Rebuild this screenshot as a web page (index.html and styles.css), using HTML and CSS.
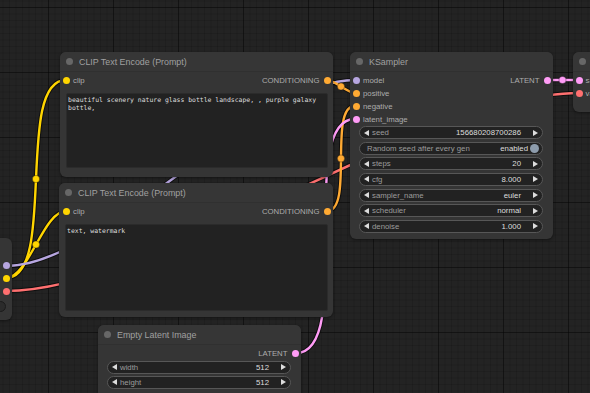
FILE: index.html
```html
<!DOCTYPE html>
<html>
<head>
<meta charset="utf-8">
<link rel="stylesheet" href="styles.css">
</head>
<body>
<div class="canvas">
  <svg class="links" width="590" height="393" viewBox="0 0 590 393">
    <g class="halo">
      <path d="M6,278 C57.7,278 14.3,80 66,80"/>
      <path d="M6,278 C28.5,278 43.5,211 66,211"/>
      <path d="M6,266 C104.9,266 256.1,80 355,80"/>
      <path d="M6,291 C157.3,291 426.7,93 579,93"/>
      <path d="M327,80 C334.7,80 347.3,93 355,93"/>
      <path d="M327,211 C354.2,211 327.8,106 355,106"/>
      <path d="M296,353 C356.3,353 294.7,119 355,119"/>
      <path d="M546,80 C554,80 571,80 579,80"/>
    </g>
    <g class="wire clip"><path d="M6,278 C57.7,278 14.3,80 66,80"/><path d="M6,278 C28.5,278 43.5,211 66,211"/></g>
    <g class="wire model"><path d="M6,266 C104.9,266 256.1,80 355,80"/></g>
    <g class="wire vae"><path d="M6,291 C157.3,291 426.7,93 579,93"/></g>
    <g class="wire cond"><path d="M327,80 C334.7,80 347.3,93 355,93"/><path d="M327,211 C354.2,211 327.8,106 355,106"/></g>
    <g class="wire latent"><path d="M296,353 C356.3,353 294.7,119 355,119"/><path d="M546,80 C554,80 571,80 579,80"/></g>
    <circle class="mid clipc" cx="36" cy="179" r="3.6"/>
    <circle class="mid clipc" cx="36" cy="244.5" r="3.6"/>
    <circle class="mid condc" cx="341" cy="86.5" r="3.6"/>
    <circle class="mid condc" cx="341" cy="158.5" r="3.6"/>
    <circle class="mid latentc" cx="562.5" cy="80" r="3.6"/>
  </svg>

  <!-- partial left node -->
  <div class="node node-left">
    <div class="left-slots">
      <span class="dot model-dot"></span>
      <span class="dot clip-dot"></span>
      <span class="dot vae-dot"></span>
      <span class="ring"></span>
    </div>
  </div>

  <!-- CLIP 1 -->
  <div class="node node-clip1">
    <div class="title"><span class="tdot"></span><span>CLIP Text Encode (Prompt)</span></div>
    <div class="body">
      <div class="io">
        <div class="slot"><span class="dot clip-dot"></span><span>clip</span></div>
        <div class="slot out"><span>CONDITIONING</span><span class="dot cond-dot"></span></div>
      </div>
      <div class="prompt prompt1">beautiful scenery nature glass bottle landscape, , purple galaxy bottle,</div>
    </div>
  </div>

  <!-- CLIP 2 -->
  <div class="node node-clip2">
    <div class="title"><span class="tdot"></span><span>CLIP Text Encode (Prompt)</span></div>
    <div class="body">
      <div class="io">
        <div class="slot"><span class="dot clip-dot"></span><span>clip</span></div>
        <div class="slot out"><span>CONDITIONING</span><span class="dot cond-dot"></span></div>
      </div>
      <div class="prompt prompt2">text, watermark</div>
    </div>
  </div>

  <!-- KSampler -->
  <div class="node node-ks">
    <div class="title"><span class="tdot"></span><span>KSampler</span></div>
    <div class="body">
      <div class="io">
        <div class="col">
          <div class="slot"><span class="dot model-dot"></span><span>model</span></div>
          <div class="slot"><span class="dot cond-dot"></span><span>positive</span></div>
          <div class="slot"><span class="dot cond-dot"></span><span>negative</span></div>
          <div class="slot"><span class="dot latent-dot"></span><span>latent_image</span></div>
        </div>
        <div class="col">
          <div class="slot out"><span>LATENT</span><span class="dot latent-dot"></span></div>
        </div>
      </div>
      <div class="widgets">
        <div class="widget"><span class="arr l"></span><span class="wl">seed</span><span class="wv">156680208700286</span><span class="arr r"></span></div>
        <div class="widget toggle"><span class="wl">Random seed after every gen</span><span class="wv">enabled</span><span class="knob"></span></div>
        <div class="widget"><span class="arr l"></span><span class="wl">steps</span><span class="wv">20</span><span class="arr r"></span></div>
        <div class="widget"><span class="arr l"></span><span class="wl">cfg</span><span class="wv">8.000</span><span class="arr r"></span></div>
        <div class="widget"><span class="arr l"></span><span class="wl">sampler_name</span><span class="wv">euler</span><span class="arr r"></span></div>
        <div class="widget"><span class="arr l"></span><span class="wl">scheduler</span><span class="wv">normal</span><span class="arr r"></span></div>
        <div class="widget"><span class="arr l"></span><span class="wl">denoise</span><span class="wv">1.000</span><span class="arr r"></span></div>
      </div>
    </div>
  </div>

  <!-- Empty Latent Image -->
  <div class="node node-latent">
    <div class="title"><span class="tdot"></span><span>Empty Latent Image</span></div>
    <div class="body">
      <div class="io">
        <div class="col"></div>
        <div class="slot out"><span>LATENT</span><span class="dot latent-dot"></span></div>
      </div>
      <div class="widgets">
        <div class="widget"><span class="arr l"></span><span class="wl">width</span><span class="wv">512</span><span class="arr r"></span></div>
        <div class="widget"><span class="arr l"></span><span class="wl">height</span><span class="wv">512</span><span class="arr r"></span></div>
      </div>
    </div>
  </div>

  <!-- partial right node -->
  <div class="node node-right">
    <div class="title"><span class="tdot"></span></div>
    <div class="body">
      <div class="slot"><span class="dot latent-dot"></span><span>samples</span></div>
      <div class="slot"><span class="dot vae-dot"></span><span>vae</span></div>
    </div>
  </div>
</div>
</body>
</html>
```

FILE: styles.css
```css
* { box-sizing: border-box; }
html, body { margin: 0; padding: 0; }
body {
  width: 590px;
  height: 393px;
  overflow: hidden;
  font-family: "Liberation Sans", Arial, sans-serif;
}
.canvas {
  position: relative;
  width: 590px;
  height: 393px;
  overflow: hidden;
  background-color: #232323;
  background-image:
    linear-gradient(to right, rgba(0,0,0,0.38) 1px, transparent 1px),
    linear-gradient(to bottom, rgba(0,0,0,0.38) 1px, transparent 1px),
    linear-gradient(to right, rgba(0,0,0,0.13) 1px, transparent 1px),
    linear-gradient(to bottom, rgba(0,0,0,0.13) 1px, transparent 1px);
  background-size: 65px 65px, 65px 65px, 6.5px 6.5px, 6.5px 6.5px;
  background-position: 48px 7px, 48px 7px, 48px 7px, 48px 7px;
}
.links { position: absolute; left: 0; top: 0; z-index: 0; }
.links path { fill: none; }
.halo path { stroke: rgba(0,0,0,0.55); stroke-width: 4.4; }
.wire path { stroke-width: 2.4; }
.wire.clip path { stroke: #ffd500; }
.wire.model path { stroke: #b7a6e0; }
.wire.vae path { stroke: #ff7070; }
.wire.cond path { stroke: #ffaa33; }
.wire.latent path { stroke: #ff9cf6; }
.mid { stroke: rgba(0,0,0,0.4); stroke-width: 0.8; }
.clipc { fill: #ffd500; }
.condc { fill: #ffaa33; }
.latentc { fill: #ff9cf6; }

.node {
  position: absolute;
  z-index: 1;
  background: #353535;
  border-radius: 6px;
  box-shadow: 0 1px 3px rgba(0,0,0,0.45);
  color: #acacac;
  font-size: 7.8px;
  display: flex;
  flex-direction: column;
}
.title {
  height: 20px;
  flex: none;
  display: flex;
  align-items: center;
  gap: 6px;
  padding-left: 6px;
  color: #a0a0a0;
  font-size: 8.9px;
  background: #363636;
  border-radius: 6px 6px 0 0;
  border-bottom: 1px solid #303030;
}
.tdot {
  width: 7px;
  height: 7px;
  border-radius: 50%;
  background: #676767;
  flex: none;
}
.body {
  display: flex;
  flex-direction: column;
  padding-top: 2px;
}
.io { display: flex; justify-content: space-between; }
.col { display: flex; flex-direction: column; }
.slot {
  height: 13px;
  display: flex;
  align-items: center;
  gap: 3px;
  padding-left: 3px;
  white-space: nowrap;
}
.slot.out { padding-left: 0; padding-right: 2.5px; gap: 4px; }
.dot {
  width: 7px;
  height: 7px;
  border-radius: 50%;
  flex: none;
}
.clip-dot { background: #ffd500; }
.cond-dot { background: #ffaa33; }
.model-dot { background: #b7a6e0; }
.latent-dot { background: #ff9cf6; }
.vae-dot { background: #ff7070; }

.prompt {
  margin: 6px 5px 0 6px;
  background: #222;
  border: 1px solid #2b2b2b;
  border-radius: 2px;
  color: #ddd;
  font-family: "DejaVu Sans Mono", "Liberation Mono", monospace;
  font-size: 6.45px;
  line-height: 8.7px;
  padding: 1.5px 1px;
}
.prompt1 { height: 75px; }
.prompt2 { height: 87px; margin-left: 6px; }

.node-clip1 { left: 60px; top: 52px; width: 273px; height: 125px; }
.node-clip2 { left: 59px; top: 183px; width: 274px; height: 134px; }
.node-clip2 .slot:first-child { padding-left: 4px; }
.node-ks { left: 350px; top: 52px; width: 203px; height: 187px; }
.node-latent { left: 98px; top: 325px; width: 203px; height: 90px; }
.node-right { left: 573px; top: 52px; width: 60px; height: 60px; }
.node-right .title { padding-left: 6px; }
.node-right .slot { padding-left: 2.5px; gap: 3px; }
.node-left { left: -30px; top: 238px; width: 42px; height: 82px; }
.left-slots {
  display: flex;
  flex-direction: column;
  align-items: flex-end;
  padding: 24px 2.5px 0 0;
  gap: 6px;
}
.ring {
  width: 11px;
  height: 11px;
  border-radius: 50%;
  border: 1.2px solid #1b1b1b;
  background: #2b2b2b;
  margin-right: 4px;
}

.widgets {
  display: flex;
  flex-direction: column;
  gap: 2.6px;
  padding: 0 10px 0 9px;
}
.node-ks .widgets { margin-top: 0.2px; }
.node-latent .widgets { margin-top: 0.5px; gap: 2px; }
.widget {
  height: 13px;
  border-radius: 7px;
  background: #222;
  border: 1px solid #575757;
  display: flex;
  align-items: center;
  padding: 0 4px 0 4px;
  font-size: 7.8px;
  white-space: nowrap;
}
.wl { color: #9c9c9c; flex: 1; padding-left: 3px; }
.wv { color: #ddd; padding-right: 12px; }
.arr { width: 0; height: 0; border-top: 3px solid transparent; border-bottom: 3px solid transparent; flex: none; }
.arr.l { border-right: 5px solid #ddd; }
.arr.r { border-left: 5px solid #ddd; }
.toggle { padding-left: 7px; padding-right: 3px; }
.toggle .wl { padding-left: 0; }
.toggle .wv { padding-right: 2px; }
.knob {
  width: 9px;
  height: 9px;
  border-radius: 50%;
  background: #8d9cac;
  flex: none;
}
```
